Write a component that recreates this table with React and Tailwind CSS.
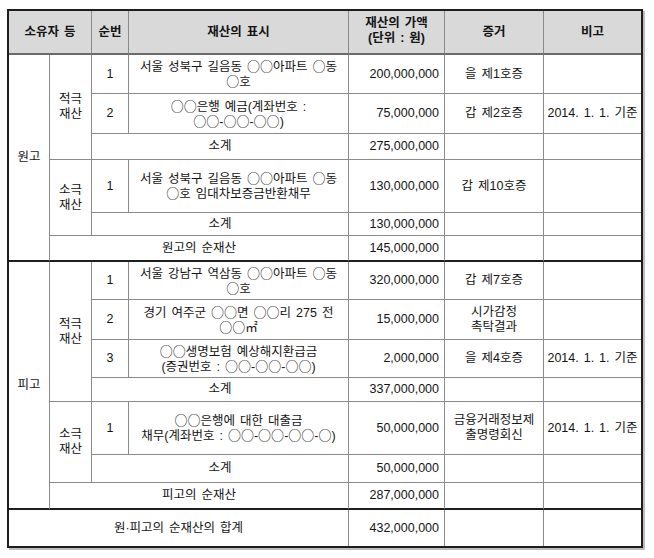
import React from "react";

const C = ({ s }) => {
  const parts = String(s).split(/(○)/);
  return (
    <>
      {parts.map((p, i) =>
        p === "○" ? (
          <span key={i} className="font-['Noto_Sans_CJK_KR',sans-serif] text-[13px] leading-[14px]">○</span>
        ) : (
          <React.Fragment key={i}>{p}</React.Fragment>
        )
      )}
    </>
  );
};

const Lines = ({ lines }) => (
  <>
    {lines.map((l, i) => (
      <div key={i} className="whitespace-nowrap h-[15px] leading-[15px] overflow-visible">
        <C s={l} />
      </div>
    ))}
  </>
);

const base =
  "flex items-center border-[#8a8a8a] text-[12.5px] leading-[15px] text-[#141414]";

export default function App() {
  return (
    <div className="w-[654px] h-[558px] bg-white pt-[9px] pl-[7px] font-['Liberation_Sans','Noto_Sans_CJK_KR',sans-serif] [word-spacing:1.5px]">
      <div className="w-[636px] border-2 border-[#1e1e1e] shadow-[2px_2px_0_#bdbdbd] grid grid-cols-[41px_42px_37px_220px_96px_99px_97px] grid-rows-[44px_39px_40px_26px_53px_23px_26px_38px_40px_38px_24px_53px_28px_27px_36px]">
        {/* Header */}
        <div className={`${base} col-start-1 col-span-2 row-start-1 justify-center bg-[#d9d9d9] border-r border-b-2 border-b-[#6a6a6a] font-bold`}>
          소유자 등
        </div>
        <div className={`${base} col-start-3 row-start-1 justify-center bg-[#d9d9d9] border-r border-b-2 border-b-[#6a6a6a] font-bold`}>
          순번
        </div>
        <div className={`${base} col-start-4 row-start-1 justify-center bg-[#d9d9d9] border-r border-b-2 border-b-[#6a6a6a] font-bold`}>
          재산의 표시
        </div>
        <div className={`${base} col-start-5 row-start-1 flex-col justify-center bg-[#d9d9d9] border-r border-b-2 border-b-[#6a6a6a] font-bold leading-[11px] pb-[2px]`}>
          <div>재산의 가액</div>
          <div>(단위 : 원)</div>
        </div>
        <div className={`${base} col-start-6 row-start-1 justify-center bg-[#d9d9d9] border-r border-b-2 border-b-[#6a6a6a] font-bold`}>
          증거
        </div>
        <div className={`${base} col-start-7 row-start-1 justify-center bg-[#d9d9d9] border-b-2 border-b-[#6a6a6a] font-bold`}>
          비고
        </div>

        {/* 원고 */}
        <div className={`${base} col-start-1 row-start-2 row-span-6 justify-center border-r border-b-2 border-b-[#1e1e1e]`}>
          원고
        </div>
        <div className={`${base} col-start-2 row-start-2 row-span-3 flex-col justify-center border-r border-b leading-[12px]`}>
          <div>적극</div>
          <div>재산</div>
        </div>
        {/* row 2 */}
        <div className={`${base} col-start-3 row-start-2 justify-center border-r border-b text-[11px]`}>1</div>
        <div className={`${base} col-start-4 row-start-2 flex-col justify-center border-r border-b`}>
          <Lines lines={["서울 성북구 길음동 ○○아파트 ○동", "○호"]} />
        </div>
        <div className={`${base} col-start-5 row-start-2 justify-end pr-[5px] border-r border-b text-[11px]`}>200,000,000</div>
        <div className={`${base} col-start-6 row-start-2 justify-center border-r border-b`}>을 제1호증</div>
        <div className={`${base} col-start-7 row-start-2 justify-center border-b`}></div>
        {/* row 3 */}
        <div className={`${base} col-start-3 row-start-3 justify-center border-r border-b text-[11px]`}>2</div>
        <div className={`${base} col-start-4 row-start-3 flex-col justify-center border-r border-b`}>
          <Lines lines={["○○은행 예금(계좌번호 :", "○○-○○-○○)"]} />
        </div>
        <div className={`${base} col-start-5 row-start-3 justify-end pr-[5px] border-r border-b text-[11px]`}>75,000,000</div>
        <div className={`${base} col-start-6 row-start-3 justify-center border-r border-b`}>갑 제2호증</div>
        <div className={`${base} col-start-7 row-start-3 justify-center border-b text-[11.5px]`}>2014. 1. 1. 기준</div>
        {/* row 4 */}
        <div className={`${base} col-start-3 col-span-2 row-start-4 justify-center border-r border-b`}>소계</div>
        <div className={`${base} col-start-5 row-start-4 justify-end pr-[5px] border-r border-b text-[11px]`}>275,000,000</div>
        <div className={`${base} col-start-6 row-start-4 border-r border-b`}></div>
        <div className={`${base} col-start-7 row-start-4 border-b`}></div>
        {/* 소극 원고 */}
        <div className={`${base} col-start-2 row-start-5 row-span-2 flex-col justify-center border-r border-b leading-[12px]`}>
          <div>소극</div>
          <div>재산</div>
        </div>
        <div className={`${base} col-start-3 row-start-5 justify-center border-r border-b text-[11px]`}>1</div>
        <div className={`${base} col-start-4 row-start-5 flex-col justify-center border-r border-b`}>
          <Lines lines={["서울 성북구 길음동 ○○아파트 ○동", "○호 임대차보증금반환채무"]} />
        </div>
        <div className={`${base} col-start-5 row-start-5 justify-end pr-[5px] border-r border-b text-[11px]`}>130,000,000</div>
        <div className={`${base} col-start-6 row-start-5 justify-center border-r border-b`}>갑 제10호증</div>
        <div className={`${base} col-start-7 row-start-5 border-b`}></div>
        {/* row 6 */}
        <div className={`${base} col-start-3 col-span-2 row-start-6 justify-center border-r border-b`}>소계</div>
        <div className={`${base} col-start-5 row-start-6 justify-end pr-[5px] border-r border-b text-[11px]`}>130,000,000</div>
        <div className={`${base} col-start-6 row-start-6 border-r border-b`}></div>
        <div className={`${base} col-start-7 row-start-6 border-b`}></div>
        {/* row 7 */}
        <div className={`${base} col-start-2 col-span-3 row-start-7 justify-center border-r border-b-2 border-b-[#1e1e1e]`}>원고의 순재산</div>
        <div className={`${base} col-start-5 row-start-7 justify-end pr-[5px] border-r border-b-2 border-b-[#1e1e1e] text-[11px]`}>145,000,000</div>
        <div className={`${base} col-start-6 row-start-7 border-r border-b-2 border-b-[#1e1e1e]`}></div>
        <div className={`${base} col-start-7 row-start-7 border-b-2 border-b-[#1e1e1e]`}></div>

        {/* 피고 */}
        <div className={`${base} col-start-1 row-start-8 row-span-7 justify-center border-r border-b-2 border-b-[#1e1e1e]`}>
          피고
        </div>
        <div className={`${base} col-start-2 row-start-8 row-span-4 flex-col justify-center border-r border-b leading-[12px]`}>
          <div>적극</div>
          <div>재산</div>
        </div>
        {/* row 8 */}
        <div className={`${base} col-start-3 row-start-8 justify-center border-r border-b text-[11px]`}>1</div>
        <div className={`${base} col-start-4 row-start-8 flex-col justify-center border-r border-b`}>
          <Lines lines={["서울 강남구 역삼동 ○○아파트 ○동", "○호"]} />
        </div>
        <div className={`${base} col-start-5 row-start-8 justify-end pr-[5px] border-r border-b text-[11px]`}>320,000,000</div>
        <div className={`${base} col-start-6 row-start-8 justify-center border-r border-b`}>갑 제7호증</div>
        <div className={`${base} col-start-7 row-start-8 border-b`}></div>
        {/* row 9 */}
        <div className={`${base} col-start-3 row-start-9 justify-center border-r border-b text-[11px]`}>2</div>
        <div className={`${base} col-start-4 row-start-9 flex-col justify-center border-r border-b`}>
          <Lines lines={["경기 여주군 ○○면 ○○리 275 전", "○○㎡"]} />
        </div>
        <div className={`${base} col-start-5 row-start-9 justify-end pr-[5px] border-r border-b text-[11px]`}>15,000,000</div>
        <div className={`${base} col-start-6 row-start-9 flex-col justify-center border-r border-b`}>
          <div>시가감정</div>
          <div>촉탁결과</div>
        </div>
        <div className={`${base} col-start-7 row-start-9 border-b`}></div>
        {/* row 10 */}
        <div className={`${base} col-start-3 row-start-10 justify-center border-r border-b text-[11px]`}>3</div>
        <div className={`${base} col-start-4 row-start-10 flex-col justify-center border-r border-b`}>
          <Lines lines={["○○생명보험 예상해지환급금", "(증권번호 : ○○-○○-○○)"]} />
        </div>
        <div className={`${base} col-start-5 row-start-10 justify-end pr-[5px] border-r border-b text-[11px]`}>2,000,000</div>
        <div className={`${base} col-start-6 row-start-10 justify-center border-r border-b`}>을 제4호증</div>
        <div className={`${base} col-start-7 row-start-10 justify-center border-b text-[11.5px]`}>2014. 1. 1. 기준</div>
        {/* row 11 */}
        <div className={`${base} col-start-3 col-span-2 row-start-11 justify-center border-r border-b`}>소계</div>
        <div className={`${base} col-start-5 row-start-11 justify-end pr-[5px] border-r border-b text-[11px]`}>337,000,000</div>
        <div className={`${base} col-start-6 row-start-11 border-r border-b`}></div>
        <div className={`${base} col-start-7 row-start-11 border-b`}></div>
        {/* 소극 피고 */}
        <div className={`${base} col-start-2 row-start-12 row-span-2 flex-col justify-center border-r border-b leading-[12px]`}>
          <div>소극</div>
          <div>재산</div>
        </div>
        <div className={`${base} col-start-3 row-start-12 justify-center border-r border-b text-[11px]`}>1</div>
        <div className={`${base} col-start-4 row-start-12 flex-col justify-center border-r border-b`}>
          <Lines lines={["○○은행에 대한 대출금", "채무(계좌번호 : ○○-○○-○○-○)"]} />
        </div>
        <div className={`${base} col-start-5 row-start-12 justify-end pr-[5px] border-r border-b text-[11px]`}>50,000,000</div>
        <div className={`${base} col-start-6 row-start-12 flex-col justify-center border-r border-b leading-[14px]`}>
          <div>금융거래정보제</div>
          <div>출명령회신</div>
        </div>
        <div className={`${base} col-start-7 row-start-12 justify-center border-b text-[11.5px]`}>2014. 1. 1. 기준</div>
        {/* row 13 */}
        <div className={`${base} col-start-3 col-span-2 row-start-13 justify-center border-r border-b`}>소계</div>
        <div className={`${base} col-start-5 row-start-13 justify-end pr-[5px] border-r border-b text-[11px]`}>50,000,000</div>
        <div className={`${base} col-start-6 row-start-13 border-r border-b`}></div>
        <div className={`${base} col-start-7 row-start-13 border-b`}></div>
        {/* row 14 */}
        <div className={`${base} col-start-2 col-span-3 row-start-14 justify-center border-r border-b-2 border-b-[#1e1e1e]`}>피고의 순재산</div>
        <div className={`${base} col-start-5 row-start-14 justify-end pr-[5px] border-r border-b-2 border-b-[#1e1e1e] text-[11px]`}>287,000,000</div>
        <div className={`${base} col-start-6 row-start-14 border-r border-b-2 border-b-[#1e1e1e]`}></div>
        <div className={`${base} col-start-7 row-start-14 border-b-2 border-b-[#1e1e1e]`}></div>

        {/* row 15 */}
        <div className={`${base} col-start-1 col-span-4 row-start-15 justify-center border-r`}>원·피고의 순재산의 합계</div>
        <div className={`${base} col-start-5 row-start-15 justify-end pr-[5px] border-r text-[11px]`}>432,000,000</div>
        <div className={`${base} col-start-6 row-start-15 border-r`}></div>
        <div className={`${base} col-start-7 row-start-15`}></div>
      </div>
    </div>
  );
}
